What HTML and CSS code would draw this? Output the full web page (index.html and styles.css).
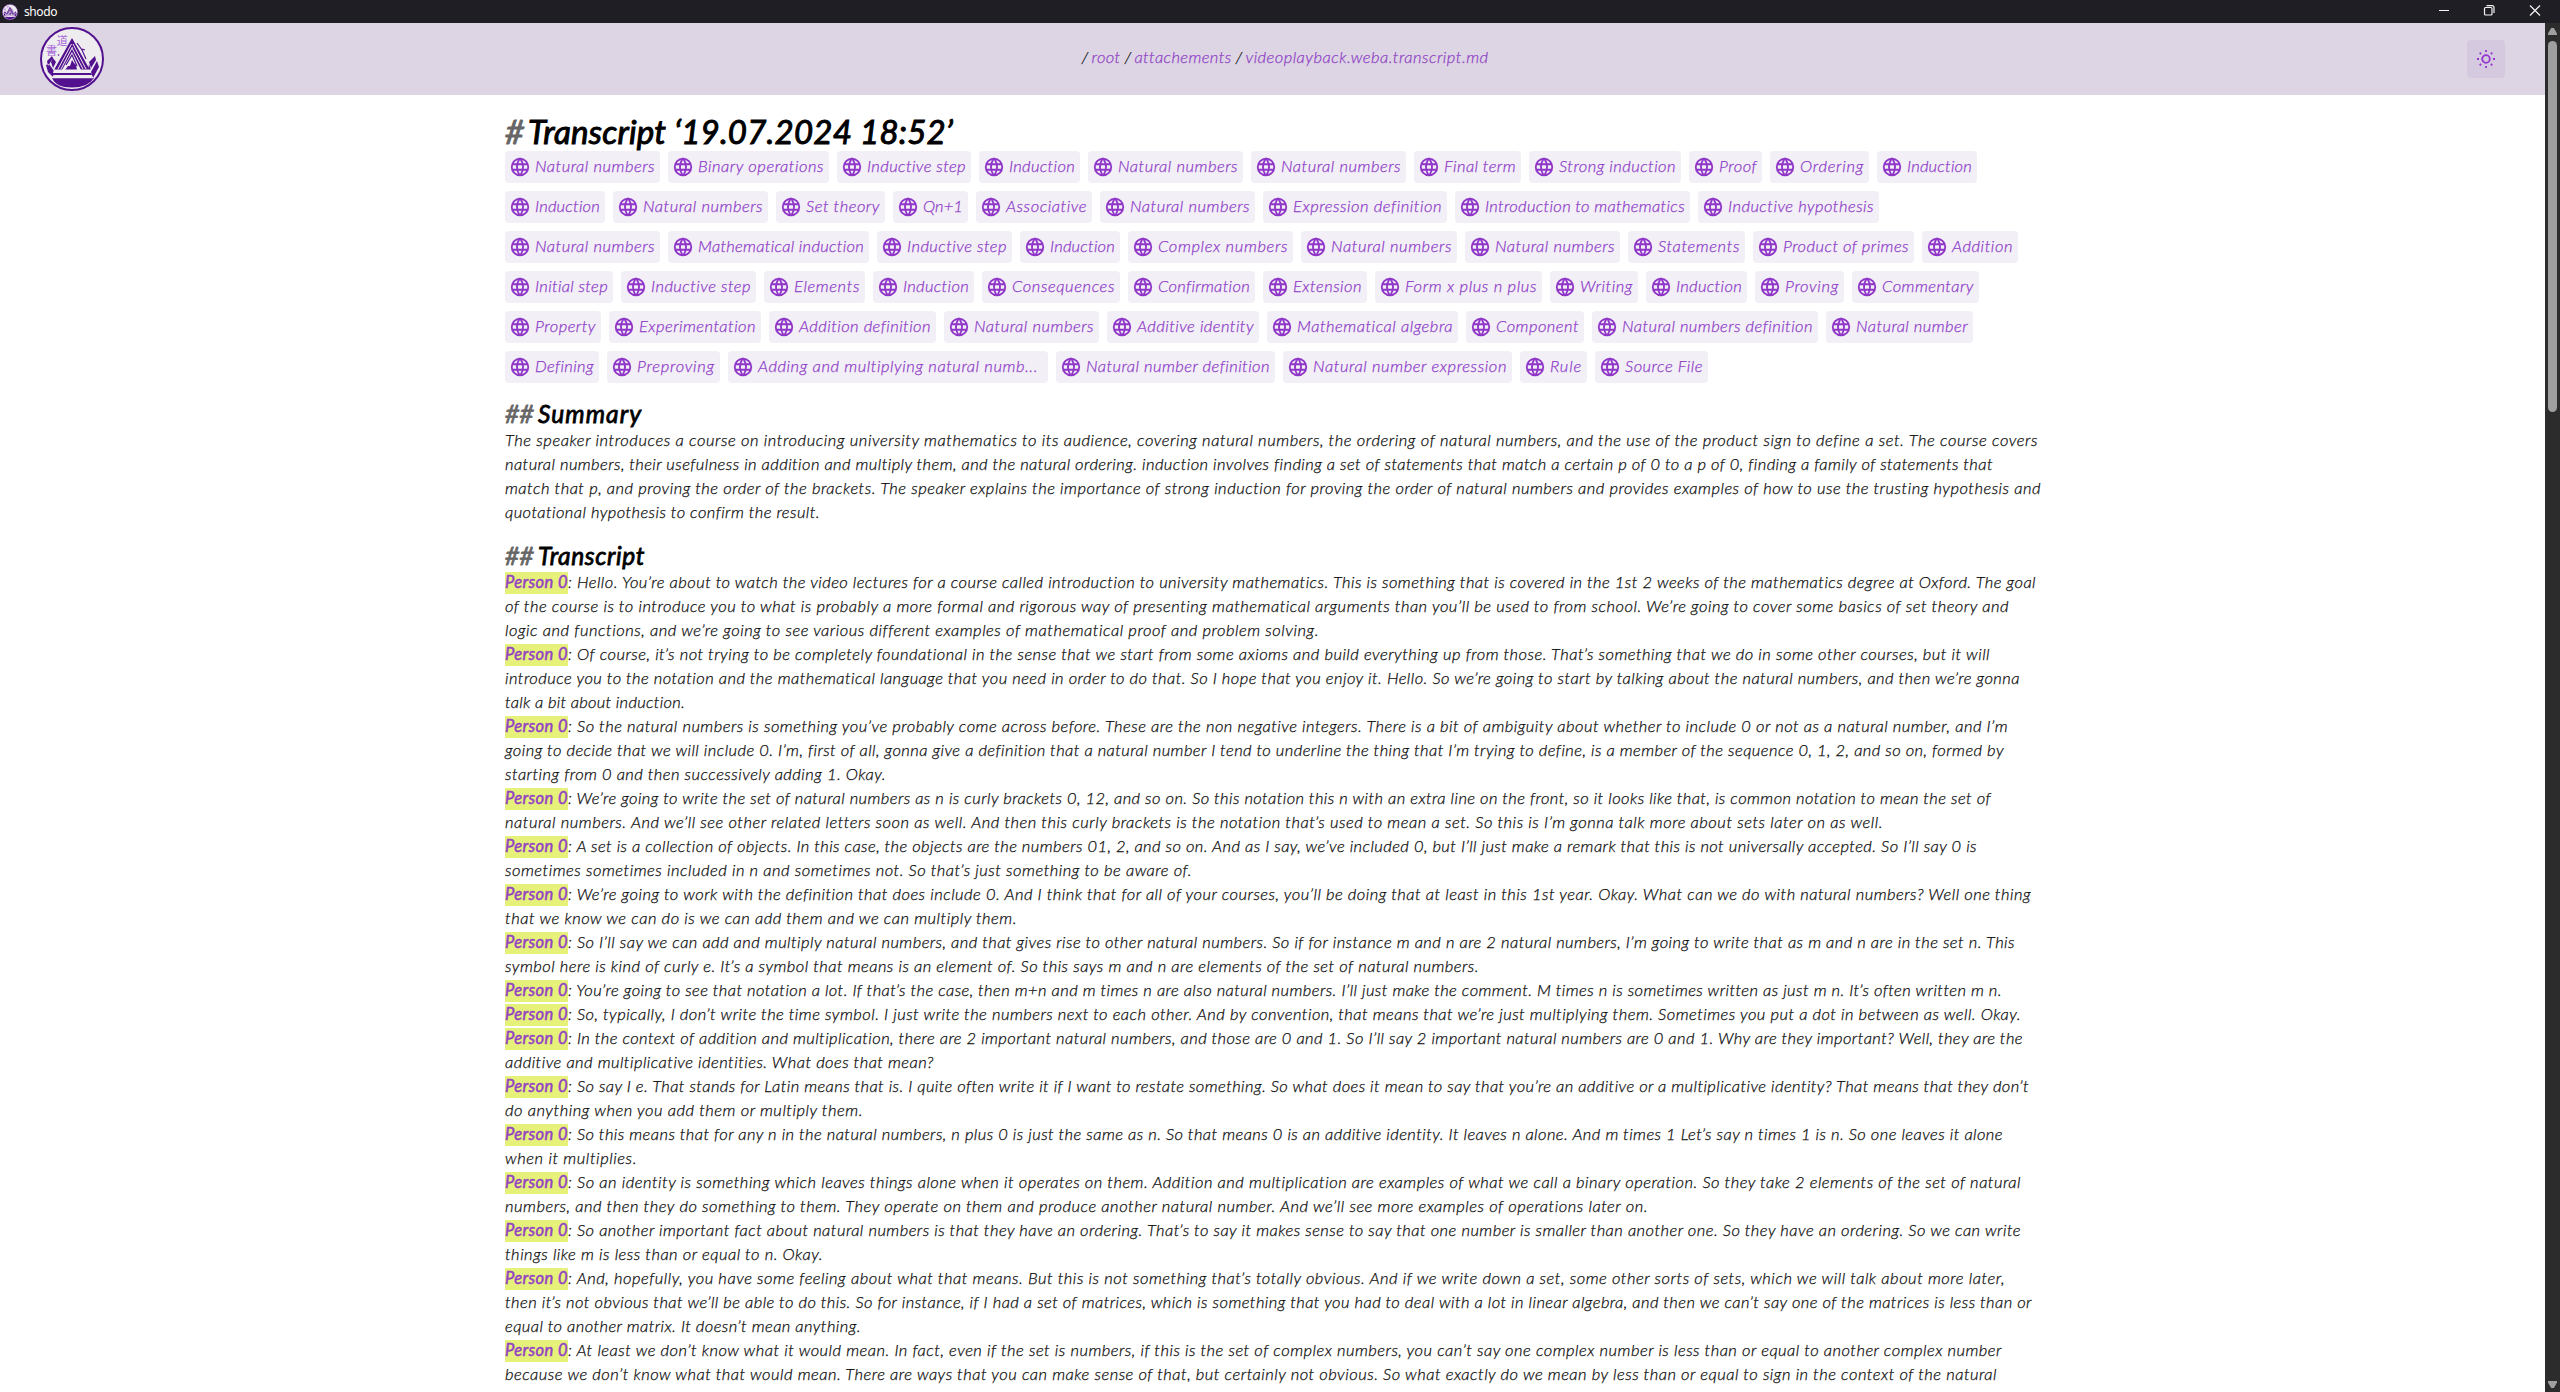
FILE: index.html
```html
<!DOCTYPE html>
<html lang="en">
<head>
<meta charset="utf-8">
<title>shodo</title>
<link rel="stylesheet" href="styles.css">
</head>
<body>
<svg class="defs" aria-hidden="true">
  <symbol id="globe" viewBox="0 0 24 24"><path d="M3 12a9 9 0 1 0 18 0a9 9 0 0 0 -18 0M3.6 9h16.8M3.6 15h16.8M11.5 3a17 17 0 0 0 0 18M12.5 3a17 17 0 0 1 0 18"/></symbol>
  <symbol id="logo" viewBox="0 0 64 64">
    <circle cx="32" cy="32" r="31" fill="#eeecef" stroke="#53118f" stroke-width="2"/>
    <path fill="#53118f" d="M7 34l5-5 1 2-5 8zM6 38l2 7 5 5 1-6-5-7zM11 35l2-4 3 4-3 6zM49 35l6-6 1 4-5 8zM57 34l2 6-6 11-2-6zM49 37l2 6-1 5-2-4z"/>
    <path fill="#53118f" d="M32 11l18 32H14z"/>
    <path fill="none" stroke="#eeecef" stroke-width="1" d="M31.500 17L18 42M32.500 20L21 42M33 17l13 25M32 21l11 21"/>
    <path fill="#eeecef" d="M32 25l9 18H22z"/>
    <path fill="#53118f" d="M32 33l2 3 2 2 1 5H25l3-4 2 0z"/>
    <path fill="none" stroke="#53118f" stroke-width="1.200" d="M37 16l5 7 4 9M26 38l6-10 5 11M42 22l3 1"/>
    <path fill="#53118f" d="M13 46h38l1 2H11zM12 51h42q-6 9.500-22 9.500t-20-9.500z"/>
    <path fill="#eeecef" d="M14 42.500h37v3.500H13zM24 48h17v1.800H24zM12 49.800h41v1.400H12z"/>
    <circle cx="18.500" cy="28" r=".8" fill="#53118f"/>
    <text x="16.800" y="17.500" class="kanji">道</text>
    <text x="6" y="27.500" class="kanji">書</text>
  </symbol>
</svg>
<div class="titlebar">
  <svg class="app-icon"><use href="#logo"/></svg><span class="app-name fit" style="--w:33px">shodo</span>
  <svg class="controls" viewBox="0 0 106 23" fill="none" stroke="#f4f4f4" stroke-width="1.200"><path d="M0 10.500h10M91 5.500l10 10M101 5.500l-10 10"/><rect x="45.500" y="7.500" width="7.500" height="7.500" rx="1"/><path d="M47.500 5.600h5.500q2 0 2 2v5.500"/></svg>
</div>
<div class="window">
<div class="view">
<header class="header">
  <svg class="logo"><use href="#logo"/></svg>
  <nav class="crumbs"><i>/</i><a class="fit" style="--w:29px">root</a><i>/</i><a class="fit" style="--w:97px">attachements</a><i>/</i><a class="fit" style="--w:243px">videoplayback.weba.transcript.md</a></nav>
  <button class="theme" aria-label="Theme"><svg viewBox="0 0 20 20"><circle cx="10" cy="10" r="3.800"/><path d="M10 1v2M10 17v2M1 10h2M17 10h2M3.700 3.700l1.400 1.400M14.900 14.900l1.400 1.400M3.700 16.300l1.400-1.400M14.900 5.100l1.400-1.400"/></svg></button>
</header>
<main class="doc">
<h1><span class="hash">#</span><span class="fit" style="--w:425px">Transcript ‘19.07.2024 18:52’</span></h1>
<div class="chips">
<a class="chip" style="--c:155px"><svg><use href="#globe"/></svg><span class="fit">Natural numbers</span></a>
<a class="chip" style="--c:161px"><svg><use href="#globe"/></svg><span class="fit">Binary operations</span></a>
<a class="chip" style="--c:134px"><svg><use href="#globe"/></svg><span class="fit">Inductive step</span></a>
<a class="chip" style="--c:101px"><svg><use href="#globe"/></svg><span class="fit">Induction</span></a>
<a class="chip" style="--c:155px"><svg><use href="#globe"/></svg><span class="fit">Natural numbers</span></a>
<a class="chip" style="--c:155px"><svg><use href="#globe"/></svg><span class="fit">Natural numbers</span></a>
<a class="chip" style="--c:107px"><svg><use href="#globe"/></svg><span class="fit">Final term</span></a>
<a class="chip" style="--c:152px"><svg><use href="#globe"/></svg><span class="fit">Strong induction</span></a>
<a class="chip" style="--c:73px"><svg><use href="#globe"/></svg><span class="fit">Proof</span></a>
<a class="chip" style="--c:99px"><svg><use href="#globe"/></svg><span class="fit">Ordering</span></a>
<a class="chip" style="--c:100px"><svg><use href="#globe"/></svg><span class="fit">Induction</span></a>
</div>
<div class="chips">
<a class="chip" style="--c:100px"><svg><use href="#globe"/></svg><span class="fit">Induction</span></a>
<a class="chip" style="--c:155px"><svg><use href="#globe"/></svg><span class="fit">Natural numbers</span></a>
<a class="chip" style="--c:109px"><svg><use href="#globe"/></svg><span class="fit">Set theory</span></a>
<a class="chip" style="--c:75px"><svg><use href="#globe"/></svg><span class="fit">Qn+1</span></a>
<a class="chip" style="--c:116px"><svg><use href="#globe"/></svg><span class="fit">Associative</span></a>
<a class="chip" style="--c:155px"><svg><use href="#globe"/></svg><span class="fit">Natural numbers</span></a>
<a class="chip" style="--c:184px"><svg><use href="#globe"/></svg><span class="fit">Expression definition</span></a>
<a class="chip" style="--c:235px"><svg><use href="#globe"/></svg><span class="fit">Introduction to mathematics</span></a>
<a class="chip" style="--c:181px"><svg><use href="#globe"/></svg><span class="fit">Inductive hypothesis</span></a>
</div>
<div class="chips">
<a class="chip" style="--c:155px"><svg><use href="#globe"/></svg><span class="fit">Natural numbers</span></a>
<a class="chip" style="--c:201px"><svg><use href="#globe"/></svg><span class="fit">Mathematical induction</span></a>
<a class="chip" style="--c:135px"><svg><use href="#globe"/></svg><span class="fit">Inductive step</span></a>
<a class="chip" style="--c:100px"><svg><use href="#globe"/></svg><span class="fit">Induction</span></a>
<a class="chip" style="--c:165px"><svg><use href="#globe"/></svg><span class="fit">Complex numbers</span></a>
<a class="chip" style="--c:156px"><svg><use href="#globe"/></svg><span class="fit">Natural numbers</span></a>
<a class="chip" style="--c:155px"><svg><use href="#globe"/></svg><span class="fit">Natural numbers</span></a>
<a class="chip" style="--c:117px"><svg><use href="#globe"/></svg><span class="fit">Statements</span></a>
<a class="chip" style="--c:161px"><svg><use href="#globe"/></svg><span class="fit">Product of primes</span></a>
<a class="chip" style="--c:96px"><svg><use href="#globe"/></svg><span class="fit">Addition</span></a>
</div>
<div class="chips">
<a class="chip" style="--c:108px"><svg><use href="#globe"/></svg><span class="fit">Initial step</span></a>
<a class="chip" style="--c:135px"><svg><use href="#globe"/></svg><span class="fit">Inductive step</span></a>
<a class="chip" style="--c:101px"><svg><use href="#globe"/></svg><span class="fit">Elements</span></a>
<a class="chip" style="--c:101px"><svg><use href="#globe"/></svg><span class="fit">Induction</span></a>
<a class="chip" style="--c:138px"><svg><use href="#globe"/></svg><span class="fit">Consequences</span></a>
<a class="chip" style="--c:127px"><svg><use href="#globe"/></svg><span class="fit">Confirmation</span></a>
<a class="chip" style="--c:104px"><svg><use href="#globe"/></svg><span class="fit">Extension</span></a>
<a class="chip" style="--c:167px"><svg><use href="#globe"/></svg><span class="fit">Form x plus n plus</span></a>
<a class="chip" style="--c:88px"><svg><use href="#globe"/></svg><span class="fit">Writing</span></a>
<a class="chip" style="--c:101px"><svg><use href="#globe"/></svg><span class="fit">Induction</span></a>
<a class="chip" style="--c:89px"><svg><use href="#globe"/></svg><span class="fit">Proving</span></a>
<a class="chip" style="--c:127px"><svg><use href="#globe"/></svg><span class="fit">Commentary</span></a>
</div>
<div class="chips">
<a class="chip" style="--c:96px"><svg><use href="#globe"/></svg><span class="fit">Property</span></a>
<a class="chip" style="--c:152px"><svg><use href="#globe"/></svg><span class="fit">Experimentation</span></a>
<a class="chip" style="--c:167px"><svg><use href="#globe"/></svg><span class="fit">Addition definition</span></a>
<a class="chip" style="--c:155px"><svg><use href="#globe"/></svg><span class="fit">Natural numbers</span></a>
<a class="chip" style="--c:152px"><svg><use href="#globe"/></svg><span class="fit">Additive identity</span></a>
<a class="chip" style="--c:191px"><svg><use href="#globe"/></svg><span class="fit">Mathematical algebra</span></a>
<a class="chip" style="--c:118px"><svg><use href="#globe"/></svg><span class="fit">Component</span></a>
<a class="chip" style="--c:226px"><svg><use href="#globe"/></svg><span class="fit">Natural numbers definition</span></a>
<a class="chip" style="--c:147px"><svg><use href="#globe"/></svg><span class="fit">Natural number</span></a>
</div>
<div class="chips">
<a class="chip" style="--c:94px"><svg><use href="#globe"/></svg><span class="fit">Defining</span></a>
<a class="chip" style="--c:113px"><svg><use href="#globe"/></svg><span class="fit">Preproving</span></a>
<a class="chip" style="--c:320px"><svg><use href="#globe"/></svg><span class="fit short">Adding and multiplying natural numb...</span></a>
<a class="chip" style="--c:219px"><svg><use href="#globe"/></svg><span class="fit">Natural number definition</span></a>
<a class="chip" style="--c:229px"><svg><use href="#globe"/></svg><span class="fit">Natural number expression</span></a>
<a class="chip" style="--c:67px"><svg><use href="#globe"/></svg><span class="fit">Rule</span></a>
<a class="chip" style="--c:113px"><svg><use href="#globe"/></svg><span class="fit">Source File</span></a>
</div>
<h2><span class="hash">##</span><span class="fit" style="--w:104px">Summary</span></h2>
<p class="fit" style="--w:1533px">The speaker introduces a course on introducing university mathematics to its audience, covering natural numbers, the ordering of natural numbers, and the use of the product sign to define a set. The course covers</p>
<p class="fit" style="--w:1488px">natural numbers, their usefulness in addition and multiply them, and the natural ordering. induction involves finding a set of statements that match a certain p of 0 to a p of 0, finding a family of statements that</p>
<p class="fit" style="--w:1536px">match that p, and proving the order of the brackets. The speaker explains the importance of strong induction for proving the order of natural numbers and provides examples of how to use the trusting hypothesis and</p>
<p class="fit" style="--w:315px">quotational hypothesis to confirm the result.</p>
<h2><span class="hash">##</span><span class="fit" style="--w:107px">Transcript</span></h2>
<p class="fit" style="--w:1531px"><mark class="fit">Person 0</mark>: Hello. You’re about to watch the video lectures for a course called introduction to university mathematics. This is something that is covered in the 1st 2 weeks of the mathematics degree at Oxford. The goal</p>
<p class="fit" style="--w:1504px">of the course is to introduce you to what is probably a more formal and rigorous way of presenting mathematical arguments than you’ll be used to from school. We’re going to cover some basics of set theory and</p>
<p class="fit" style="--w:814px">logic and functions, and we’re going to see various different examples of mathematical proof and problem solving.</p>
<p class="fit" style="--w:1485px"><mark class="fit">Person 0</mark>: Of course, it’s not trying to be completely foundational in the sense that we start from some axioms and build everything up from those. That’s something that we do in some other courses, but it will</p>
<p class="fit" style="--w:1515px">introduce you to the notation and the mathematical language that you need in order to do that. So I hope that you enjoy it. Hello. So we’re going to start by talking about the natural numbers, and then we’re gonna</p>
<p class="fit" style="--w:180px">talk a bit about induction.</p>
<p class="fit" style="--w:1503px"><mark class="fit">Person 0</mark>: So the natural numbers is something you’ve probably come across before. These are the non negative integers. There is a bit of ambiguity about whether to include 0 or not as a natural number, and I’m</p>
<p class="fit" style="--w:1499px">going to decide that we will include 0. I’m, first of all, gonna give a definition that a natural number I tend to underline the thing that I’m trying to define, is a member of the sequence 0, 1, 2, and so on, formed by</p>
<p class="fit" style="--w:381px">starting from 0 and then successively adding 1. Okay.</p>
<p class="fit" style="--w:1486px"><mark class="fit">Person 0</mark>: We’re going to write the set of natural numbers as n is curly brackets 0, 12, and so on. So this notation this n with an extra line on the front, so it looks like that, is common notation to mean the set of</p>
<p class="fit" style="--w:1378px">natural numbers. And we’ll see other related letters soon as well. And then this curly brackets is the notation that’s used to mean a set. So this is I’m gonna talk more about sets later on as well.</p>
<p class="fit" style="--w:1472px"><mark class="fit">Person 0</mark>: A set is a collection of objects. In this case, the objects are the numbers 01, 2, and so on. And as I say, we’ve included 0, but I’ll just make a remark that this is not universally accepted. So I’ll say 0 is</p>
<p class="fit" style="--w:687px">sometimes sometimes included in n and sometimes not. So that’s just something to be aware of.</p>
<p class="fit" style="--w:1526px"><mark class="fit">Person 0</mark>: We’re going to work with the definition that does include 0. And I think that for all of your courses, you’ll be doing that at least in this 1st year. Okay. What can we do with natural numbers? Well one thing</p>
<p class="fit" style="--w:512px">that we know we can do is we can add them and we can multiply them.</p>
<p class="fit" style="--w:1510px"><mark class="fit">Person 0</mark>: So I’ll say we can add and multiply natural numbers, and that gives rise to other natural numbers. So if for instance m and n are 2 natural numbers, I’m going to write that as m and n are in the set n. This</p>
<p class="fit" style="--w:974px">symbol here is kind of curly e. It’s a symbol that means is an element of. So this says m and n are elements of the set of natural numbers.</p>
<p class="fit" style="--w:1497px"><mark class="fit">Person 0</mark>: You’re going to see that notation a lot. If that’s the case, then m+n and m times n are also natural numbers. I’ll just make the comment. M times n is sometimes written as just m n. It’s often written m n.</p>
<p class="fit" style="--w:1516px"><mark class="fit">Person 0</mark>: So, typically, I don’t write the time symbol. I just write the numbers next to each other. And by convention, that means that we’re just multiplying them. Sometimes you put a dot in between as well. Okay.</p>
<p class="fit" style="--w:1518px"><mark class="fit">Person 0</mark>: In the context of addition and multiplication, there are 2 important natural numbers, and those are 0 and 1. So I’ll say 2 important natural numbers are 0 and 1. Why are they important? Well, they are the</p>
<p class="fit" style="--w:429px">additive and multiplicative identities. What does that mean?</p>
<p class="fit" style="--w:1524px"><mark class="fit">Person 0</mark>: So say I e. That stands for Latin means that is. I quite often write it if I want to restate something. So what does it mean to say that you’re an additive or a multiplicative identity? That means that they don’t</p>
<p class="fit" style="--w:358px">do anything when you add them or multiply them.</p>
<p class="fit" style="--w:1498px"><mark class="fit">Person 0</mark>: So this means that for any n in the natural numbers, n plus 0 is just the same as n. So that means 0 is an additive identity. It leaves n alone. And m times 1 Let’s say n times 1 is n. So one leaves it alone</p>
<p class="fit" style="--w:132px">when it multiplies.</p>
<p class="fit" style="--w:1516px"><mark class="fit">Person 0</mark>: So an identity is something which leaves things alone when it operates on them. Addition and multiplication are examples of what we call a binary operation. So they take 2 elements of the set of natural</p>
<p class="fit" style="--w:1143px">numbers, and then they do something to them. They operate on them and produce another natural number. And we’ll see more examples of operations later on.</p>
<p class="fit" style="--w:1516px"><mark class="fit">Person 0</mark>: So another important fact about natural numbers is that they have an ordering. That’s to say it makes sense to say that one number is smaller than another one. So they have an ordering. So we can write</p>
<p class="fit" style="--w:318px">things like m is less than or equal to n. Okay.</p>
<p class="fit" style="--w:1500px"><mark class="fit">Person 0</mark>: And, hopefully, you have some feeling about what that means. But this is not something that’s totally obvious. And if we write down a set, some other sorts of sets, which we will talk about more later,</p>
<p class="fit" style="--w:1527px">then it’s not obvious that we’ll be able to do this. So for instance, if I had a set of matrices, which is something that you had to deal with a lot in linear algebra, and then we can’t say one of the matrices is less than or</p>
<p class="fit" style="--w:356px">equal to another matrix. It doesn’t mean anything.</p>
<p class="fit" style="--w:1497px"><mark class="fit">Person 0</mark>: At least we don’t know what it would mean. In fact, even if the set is numbers, if this is the set of complex numbers, you can’t say one complex number is less than or equal to another complex number</p>
<p class="fit" style="--w:1492px">because we don’t know what that would mean. There are ways that you can make sense of that, but certainly not obvious. So what exactly do we mean by less than or equal to sign in the context of the natural</p>
</main>
</div>
<div class="scrollbar"><b class="up"></b><b class="thumb"></b><b class="down"></b></div>
</div>
<script src="fit.js"></script>
</body>
</html>
```
FILE: styles.css
```css
* { box-sizing: border-box; }
html, body { margin: 0; height: 100%; overflow: hidden; }
body {
  display: flex; flex-direction: column; background: #fff; color: #0c0c0c;
  font: italic 300 16.5px/24px Lato, "Open Sans", sans-serif;
  -webkit-text-stroke: .25px currentColor;
}
.defs { display: none; }
.kanji { font: normal 400 11px "Noto Sans CJK JP", sans-serif; fill: #a768d8; -webkit-text-stroke: 0; }
.titlebar {
  flex: none; height: 23px; background: #1f1e24; color: #fff; display: flex; align-items: center;
  padding: 0 20px 0 2px; font: normal 12px/23px "Noto Sans", "Open Sans", sans-serif;
  -webkit-text-stroke: 0;
}
.app-icon { width: 16px; height: 16px; margin-right: 6px; }
.controls { width: 106px; height: 23px; margin-left: auto; margin-right: -5px; }
.window { flex: 1; min-height: 0; display: flex; }
.view { flex: 1; overflow: hidden; }
.header {
  height: 72px; background: #ddd5e3; display: grid; grid-template-columns: 1fr auto 1fr;
  align-items: center; padding: 0 40px;
}
.logo { width: 64px; height: 64px; }
.crumbs { display: flex; gap: 3px; margin-left: 26px; height: 24px; line-height: 21px; }
.crumbs i { width: 7px; }
.crumbs a { color: #8f42c6; margin-right: 1px; }
.theme {
  justify-self: end; width: 38px; height: 38px; border: 0; border-radius: 4px; padding: 9px;
  background: #d5c9df;
}
.theme svg { display: block; width: 20px; height: 20px; fill: none; stroke: #9536cd; stroke-width: 1.8; }
.doc { width: 1536px; margin: 0 0 0 505px; padding-top: 16px; }
h1, h2, p { margin: 0; white-space: nowrap; }
h1, h2 { display: flex; color: #000; font-weight: 400; }
h1 { font-size: 33px; line-height: 40px; -webkit-text-stroke-width: 1px; }
h2 { font-size: 24.5px; line-height: 31px; margin-top: 15px; -webkit-text-stroke-width: .8px; }
.hash { color: #666; flex: none; }
h1 .hash { width: 23px; }
h2 .hash { width: 33px; letter-spacing: .3px; }
.fit { display: block; width: var(--w); white-space: nowrap; font-variant-ligatures: none; }
mark.fit {
  --w: 63px; display: inline-block; height: 22px; line-height: 21px; vertical-align: baseline;
  background: #e6f17a; color: #9442c4; font-weight: 400; -webkit-text-stroke-width: .5px;
}
p { height: 24px; line-height: 22px; }
.chips { display: flex; gap: 8px; }
.chips + .chips { margin-top: 8px; }
.chip {
  --w: calc(var(--c) - 35px);
  flex: none; width: var(--c); height: 32px; display: flex; align-items: center; gap: 4px;
  padding-left: 4px; border-radius: 4px; background: #f2eff7; color: #8f3cc8;
}
.chip .fit { height: 24px; line-height: 22px; }
.chip .short { --w: 280px; }
.chip svg {
  flex: none; width: 22px; height: 22px; fill: none; stroke: #8f35c8; stroke-width: 2;
  stroke-linecap: round; stroke-linejoin: round;
}
.scrollbar {
  width: 15px; background: #2c2c2c; display: flex; flex-direction: column; align-items: center;
  padding: 5px 0 4px;
}
.up, .down { width: 9px; height: 7px; background: #9f9f9f; }
.up { clip-path: polygon(35% 0, 65% 0, 100% 80%, 100% 100%, 0 100%, 0 80%); }
.down { clip-path: polygon(0 0, 100% 0, 100% 20%, 65% 100%, 35% 100%, 0 20%); margin-top: auto; }
.thumb { width: 9px; height: 371px; margin-top: 6px; border-radius: 5px; background: #9f9f9f; }
```
FILE: fit.js
```js
// Spread the letters of each text run over the width set for it.
function fit(el) {
  const target = el.getBoundingClientRect().width;
  const mark = el.querySelector("mark");
  const count = el.textContent.length - (mark ? mark.textContent.length : 0);
  const range = document.createRange();
  range.selectNodeContents(el);
  const natural = range.getBoundingClientRect().width;
  el.style.letterSpacing = ((target - natural) / count).toFixed(4) + "px";
}
document.querySelectorAll("mark.fit").forEach(fit);
document.querySelectorAll(".fit:not(mark)").forEach(fit);
```
